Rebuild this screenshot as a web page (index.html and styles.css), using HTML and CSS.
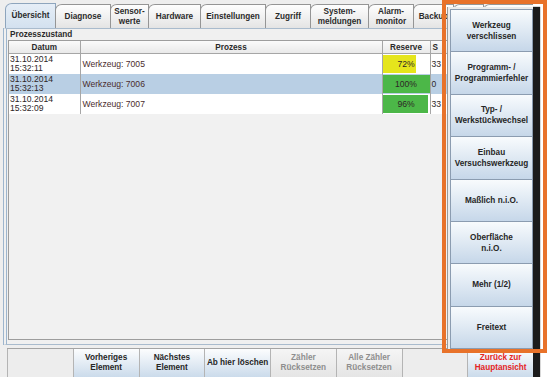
FILE: index.html
```html
<!DOCTYPE html>
<html lang="de">
<head>
    <meta charset="UTF-8">
    <meta name="viewport" content="width=device-width, initial-scale=1.0">
    <title>Prozesszustand</title>
    <link rel="stylesheet" href="styles.css">
</head>
<body>
    <div class="window">
        <div class="tabs">
            <div class="tab active">Übersicht</div>
            <div class="tab">Diagnose</div>
            <div class="tab">Sensor-<br>werte</div>
            <div class="tab">Hardware</div>
            <div class="tab">Einstellungen</div>
            <div class="tab">Zugriff</div>
            <div class="tab">System-<br>meldungen</div>
            <div class="tab">Alarm-<br>monitor</div>
            <div class="tab">Backup</div>
            <div class="tab"></div>
            <div class="tab"></div>
        </div>

        <div class="tab-body">
            <div class="group-title">Prozesszustand</div>
            <div class="table-pane">
                <table class="process-table">
                    <colgroup>
                        <col class="col-date">
                        <col class="col-process">
                        <col class="col-reserve">
                        <col>
                    </colgroup>
                    <thead>
                        <tr>
                            <th>Datum</th>
                            <th>Prozess</th>
                            <th>Reserve</th>
                            <th class="th-s">S</th>
                        </tr>
                    </thead>
                    <tbody>
                        <tr>
                            <td class="date">31.10.2014<br>15:32:11</td>
                            <td class="process">Werkzeug: 7005</td>
                            <td class="reserve"><div class="bar low" style="width:72%"></div><span>72%</span></td>
                            <td>33</td>
                        </tr>
                        <tr class="selected">
                            <td class="date">31.10.2014<br>15:32:13</td>
                            <td class="process">Werkzeug: 7006</td>
                            <td class="reserve"><div class="bar" style="width:100%"></div><span>100%</span></td>
                            <td>0</td>
                        </tr>
                        <tr>
                            <td class="date">31.10.2014<br>15:32:09</td>
                            <td class="process">Werkzeug: 7007</td>
                            <td class="reserve"><div class="bar" style="width:96%"></div><span>96%</span></td>
                            <td>33</td>
                        </tr>
                    </tbody>
                </table>
            </div>
        </div>

        <div class="actions">
            <div class="action blank"></div>
            <div class="action">Vorheriges<br>Element</div>
            <div class="action">Nächstes<br>Element</div>
            <div class="action">Ab hier löschen</div>
            <div class="action disabled">Zähler<br>Rücksetzen</div>
            <div class="action disabled">Alle Zähler<br>Rücksetzen</div>
            <div class="action blank"></div>
            <div class="action back">Zurück zur<br>Hauptansicht</div>
        </div>

        <!-- Auswahl der Stoergruende -->
        <div class="popup">
            <div class="popup-btn">Werkzeug<br>verschlissen</div>
            <div class="popup-btn">Programm- /<br>Programmierfehler</div>
            <div class="popup-btn">Typ- /<br>Werkstückwechsel</div>
            <div class="popup-btn">Einbau<br>Versuchswerkzeug</div>
            <div class="popup-btn">Maßlich n.i.O.</div>
            <div class="popup-btn">Oberfläche<br>n.i.O.</div>
            <div class="popup-btn">Mehr (1/2)</div>
            <div class="popup-btn">Freitext</div>
        </div>
    </div>

    <div class="highlight"></div>
</body>
</html>
```

FILE: styles.css
```css
body {
    margin: 0;
    background-color: #fff;
    font-family: "Liberation Sans", Arial, sans-serif;
    font-size: 8.2px;
    color: #222;
}

.window {
    position: relative;
    width: 533px;
    height: 377px;
    background-color: #eeeeee;
    box-shadow: 7px 7px 1px #1b1b1b;
    overflow: hidden;
}

/* Reiter */
.tabs {
    display: grid;
    grid-template-columns: 50px 55px 38px 52px 65px 45px 58px 45px 40px 30px 60px;
    align-items: end;
    height: 25px;
    padding: 3px 0 0 5px;
}

.tab {
    height: 24px;
    box-sizing: border-box;
    margin-right: -1px;
    border: 1px solid #959595;
    border-bottom: none;
    border-top-left-radius: 7px 6px;
    background: linear-gradient(#fefefe, #e4e4e4);
    display: flex;
    align-items: center;
    justify-content: center;
    text-align: center;
    font-weight: bold;
    line-height: 9.5px;
    color: #2b2b2b;
}

.tab.active {
    height: 25px;
    background: linear-gradient(#e6eef7, #d3e1ef);
    border-color: #8ea5bd;
}

.tab-body {
    height: 317px;
    box-sizing: border-box;
    margin-left: 3px;
    border: 1px solid #a9bbcd;
    border-left: 4px double #9db5cd;
    background-color: #f0f0f0;
    padding: 0 0 4px 1px;
    display: flex;
    flex-direction: column;
}

.group-title {
    height: 11px;
    line-height: 11px;
    padding-left: 2px;
    font-weight: bold;
    color: #2a2a2a;
}

.table-pane {
    flex: 1;
    border: 1px solid #9d9d9d;
    background-color: #f1f1f1;
}

.process-table {
    width: 100%;
    table-layout: fixed;
    border-collapse: collapse;
}

.col-date { width: 71px; }
.col-process { width: 302px; }
.col-reserve { width: 48px; }

.process-table th {
    height: 12px;
    padding: 0;
    font-weight: bold;
    text-align: center;
    color: #2a2a2a;
    background: linear-gradient(#fafafa, #e9e9e9);
    border-right: 1px solid #a6a6a6;
    border-bottom: 1px solid #a6a6a6;
}

.process-table th.th-s {
    text-align: left;
    padding-left: 2px;
}

.process-table td {
    height: 19px;
    padding: 0 0 0 1px;
    font-size: 8.6px;
    line-height: 9px;
    color: #2e2626;
    background-color: #fff;
    border-right: 1px solid #a6a6a6;
    white-space: nowrap;
    overflow: hidden;
}

.process-table td.date {
    vertical-align: top;
    padding-top: 1px;
}

.process-table td.process {
    padding-left: 2px;
    color: #4a2b2b;
}

.process-table tr.selected td {
    background-color: #b9cfe4;
}

.process-table td.reserve {
    position: relative;
    padding: 0;
    text-align: center;
}

.bar {
    position: absolute;
    left: 0;
    top: 1px;
    bottom: 1px;
    background-color: #4cb748;
}

.bar.low {
    background-color: #e5e51c;
}

.reserve span {
    position: relative;
}

/* Schaltflaechen unten */
.actions {
    display: grid;
    grid-template-columns: repeat(8, 1fr);
    height: 29px;
    margin: 3px 0 0 7px;
    border-top: 1px solid #a4a4a4;
    box-sizing: border-box;
}

.action {
    display: flex;
    align-items: center;
    justify-content: center;
    text-align: center;
    font-weight: bold;
    line-height: 10px;
    color: #262626;
    border-left: 1px solid #b4b4b4;
    background: linear-gradient(#fcfdfe, #cbdbeb);
}

.action.blank {
    background: #ededed;
}

.action.disabled {
    color: #8e8e8e;
    background: linear-gradient(#f5f5f5, #e5e5e5);
}

.action.back {
    color: #e52424;
}

/* Auswahlfenster */
.popup {
    position: absolute;
    left: 447px;
    top: 7px;
    width: 86px;
    height: 342px;
    box-sizing: border-box;
    padding: 3px 0 0 2px;
    background-color: #ececec;
    border-left: 1px solid #9a9a9a;
    display: grid;
    grid-template-rows: repeat(8, 1fr);
}

.popup-btn {
    display: flex;
    align-items: center;
    justify-content: center;
    text-align: center;
    font-weight: bold;
    line-height: 11px;
    color: #262626;
    border: 1px solid #8b9cb0;
    margin-top: -1px;
    background: linear-gradient(#f8fbfd, #c6d7e9);
}

.highlight {
    position: absolute;
    left: 442px;
    top: 0;
    width: 105px;
    height: 353px;
    box-sizing: border-box;
    border: 4px solid #e8722a;
    pointer-events: none;
}
```
